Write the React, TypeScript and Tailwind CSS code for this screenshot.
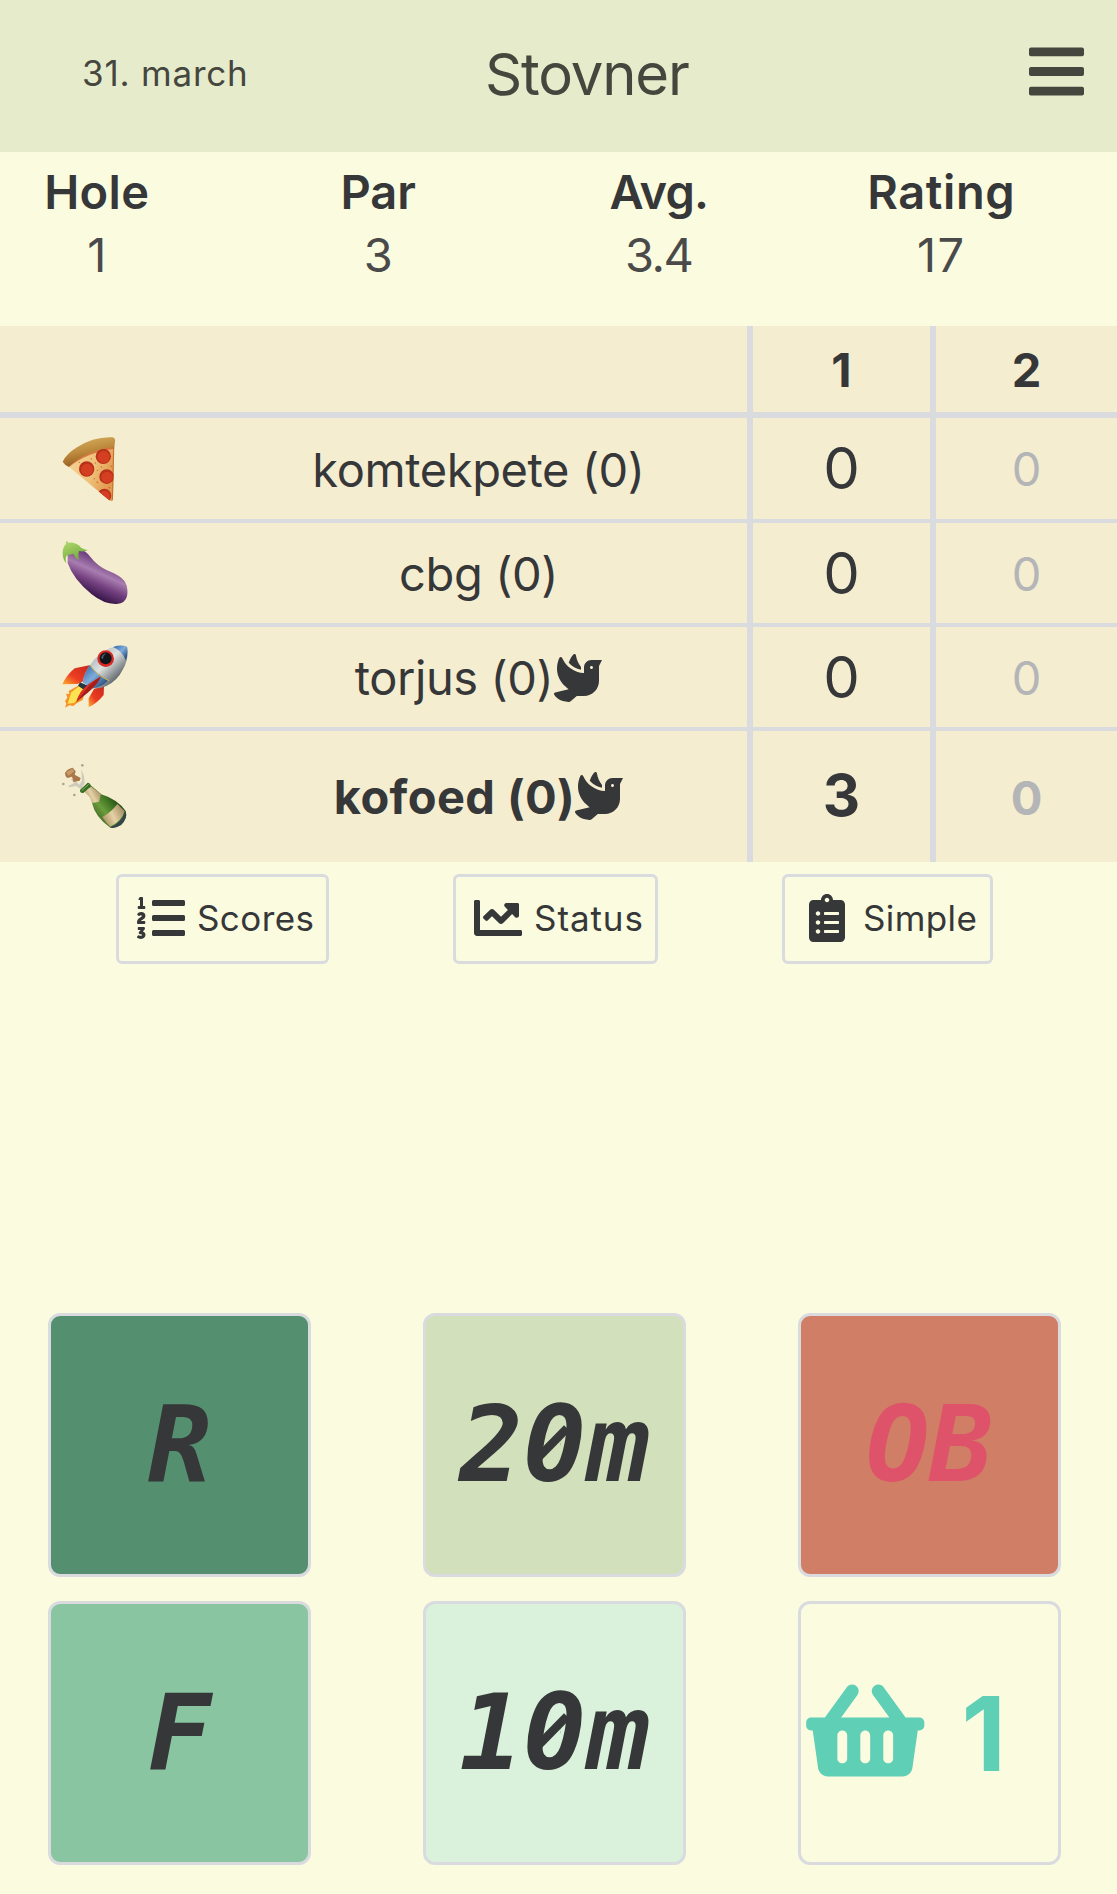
import React from 'react';
import { FaBars, FaChartLine, FaClipboardList, FaDove, FaListOl, FaShoppingBasket } from 'react-icons/fa';

function Pizza() {
  return (
    <svg className="block size-[66px]" viewBox="0 0 198 198">
      <defs>
        <linearGradient id="crust" x1="0" y1="0" x2="0.35" y2="1">
          <stop offset="0" stopColor="#dcb566" />
          <stop offset="0.55" stopColor="#bd8a3c" />
          <stop offset="1" stopColor="#93591f" />
        </linearGradient>
        <linearGradient id="cheese" x1="0" y1="0" x2="1" y2="0.4">
          <stop offset="0" stopColor="#f4d79a" />
          <stop offset="0.6" stopColor="#eec27a" />
          <stop offset="1" stopColor="#e39a50" />
        </linearGradient>
        <clipPath id="slice">
          <path d="M17 86 Q75 38 157 28 L153 186 Q151 196 142 190 L100 155 Z" />
        </clipPath>
      </defs>
      <path d="M17 86 Q75 38 157 28 L153 186 Q151 196 142 190 L100 155 Z" fill="url(#cheese)" />
      <g clipPath="url(#slice)">
        <path d="M15 90 Q75 40 160 31" fill="none" stroke="#c9501f" strokeWidth="8" opacity="0.65" />
        <path d="M156 30 L152 192" fill="none" stroke="#b96a25" strokeWidth="5" opacity="0.8" />
        <g fill="#b9301b">
          <circle cx="124" cy="58" r="23" />
          <circle cx="74" cy="96" r="23" />
          <circle cx="134" cy="119" r="22" />
          <circle cx="127" cy="176" r="21" />
        </g>
        <g fill="#d43f22">
          <circle cx="125" cy="60" r="18" />
          <circle cx="75" cy="98" r="18" />
          <circle cx="135" cy="121" r="17" />
          <circle cx="128" cy="177" r="16" />
        </g>
        <g fill="#d06a2c">
          <circle cx="100" cy="78" r="2" />
          <circle cx="106" cy="100" r="2" />
          <circle cx="97" cy="125" r="2" />
          <circle cx="106" cy="136" r="2.5" />
          <circle cx="148" cy="88" r="2.5" />
          <circle cx="118" cy="90" r="2" />
          <circle cx="52" cy="76" r="2" />
          <circle cx="142" cy="152" r="2.5" />
          <circle cx="88" cy="66" r="2" />
        </g>
      </g>
      <path d="M2 74 Q14 50 45 31 Q95 -2 152 1 Q161 2 159 14 L157 30 Q75 38 20 89 Q8 84 2 74 Z" fill="url(#crust)" />
    </svg>
  );
}

function Eggplant() {
  return (
    <svg className="block size-[66px]" viewBox="0 0 198 198">
      <defs>
        <linearGradient id="skin" x1="0.66" y1="0.2" x2="0.36" y2="0.82">
          <stop offset="0" stopColor="#613272" />
          <stop offset="0.4" stopColor="#a87db0" />
          <stop offset="0.68" stopColor="#73407f" />
          <stop offset="1" stopColor="#39174a" />
        </linearGradient>
        <linearGradient id="cap" x1="0" y1="0" x2="0.5" y2="1">
          <stop offset="0" stopColor="#b4da72" />
          <stop offset="1" stopColor="#6ea838" />
        </linearGradient>
      </defs>
      <path
        d="M17 42 Q24 22 46 23 Q70 25 86 49 Q104 73 135 88 Q176 104 188 121 Q200 139 195 166 Q190 187 164 189 Q128 191 89 160 Q34 115 17 66 Z"
        fill="url(#skin)"
      />
      <path
        d="M11 2 Q17 -1 19 5 Q38 2 53 15 Q58 24 77 27 Q69 34 51 30 Q48 40 50 57 Q39 51 34 38 L22 41 L13 45 Q9 53 13 67 Q1 56 2 32 Q4 15 12 9 Z"
        fill="url(#cap)"
      />
    </svg>
  );
}

function Rocket() {
  return (
    <svg className="block size-[66px]" viewBox="0 0 198 198">
      <defs>
        <linearGradient id="hull" x1="0.2" y1="0.2" x2="0.8" y2="0.8">
          <stop offset="0" stopColor="#a4b3bb" />
          <stop offset="0.45" stopColor="#dfe1df" />
          <stop offset="1" stopColor="#535c62" />
        </linearGradient>
        <linearGradient id="paint" x1="0.1" y1="0.2" x2="0.8" y2="0.9">
          <stop offset="0" stopColor="#4479b4" />
          <stop offset="0.45" stopColor="#80acdb" />
          <stop offset="1" stopColor="#28507f" />
        </linearGradient>
        <linearGradient id="fin" x1="1" y1="0" x2="0" y2="1">
          <stop offset="0" stopColor="#c5271c" />
          <stop offset="0.6" stopColor="#ec3d22" />
          <stop offset="1" stopColor="#ffb02e" />
        </linearGradient>
      </defs>
      <path d="M86 60 L38 70 Q14 90 1 118 L46 117 L66 108 Z" fill="url(#fin)" />
      <path d="M126 122 L125 150 Q106 174 80 187 L80 160 L96 132 Z" fill="url(#fin)" />
      <path
        d="M52 120 L20 138 L22 147 L12 146 L16 158 L9 168 L13 176 L9 188 L22 181 L34 183 L45 174 L62 165 L72 132 Z"
        fill="#f59328"
      />
      <path d="M52 123 L28 142 L22 160 L17 176 L36 174 L52 160 L68 136 Z" fill="#ffe252" />
      <path d="M54 112 L78 122 L68 136 L48 122 Z" fill="#263744" />
      <path
        d="M195 5 Q202 38 183 73 Q166 108 133 123 Q112 133 88 130 L62 112 Q66 85 84 60 Q105 29 143 10 Q170 -2 195 5 Z"
        fill="url(#hull)"
      />
      <path d="M195 5 Q199 25 192 47 Q182 18 153 6 Q176 -2 195 5 Z" fill="url(#paint)" />
      <path d="M84 60 Q102 85 139 106 Q116 130 88 130 L62 112 Q66 85 84 60 Z" fill="url(#paint)" />
      <path d="M84 60 Q102 90 141 107" fill="none" stroke="#d2bb52" strokeWidth="3" />
      <circle cx="131" cy="41" r="25" fill="#d92923" />
      <circle cx="131" cy="40" r="18" fill="#0f151b" />
      <path d="M117 39 Q120 27 133 25 Q124 31 123 42 Z" fill="#4a5a66" />
      <path d="M117 94 Q109 117 79 142 L43 171 Q52 137 82 116 Z" fill="#a91d18" />
      <path d="M117 94 Q92 109 71 134 L43 171 Q52 137 82 116 Z" fill="#dc3325" />
    </svg>
  );
}

function Champagne() {
  return (
    <svg className="block size-[66px]" viewBox="0 0 198 198">
      <defs>
        <linearGradient id="glass" x1="0.1" y1="0.8" x2="0.8" y2="0.2">
          <stop offset="0" stopColor="#1f4a14" />
          <stop offset="0.45" stopColor="#6c9c3c" />
          <stop offset="0.7" stopColor="#3d7422" />
          <stop offset="1" stopColor="#17330f" />
        </linearGradient>
        <linearGradient id="label" x1="0" y1="0.7" x2="1" y2="0.2">
          <stop offset="0" stopColor="#a88f60" />
          <stop offset="0.45" stopColor="#e5d2a6" />
          <stop offset="1" stopColor="#9c835a" />
        </linearGradient>
      </defs>
      <path d="M34 45 L52 62 L60 51 L58 16 L66 36 L68 56 L58 76 L42 66 L22 70 L19 65 L36 58 L26 44 Z" fill="#cfcbbb" />
      <g fill="#aaa394">
        <circle cx="61" cy="4" r="4" />
        <circle cx="4" cy="60" r="4" />
        <circle cx="37" cy="93" r="4" />
      </g>
      <path d="M9 26 Q16 14 32 11 L41 22 L38 32 L56 42 L53 50 L35 54 L30 38 L17 42 Q9 38 9 26 Z" fill="#aa7748" />
      <path d="M12 25 L31 14 L37 22 L20 35 Z" fill="#c79a69" />
      <path d="M66 77 L86 64 L118 91 Q166 106 191 141 Q197 163 177 183 Q156 196 143 190 Q99 157 91 120 L86 98 Z" fill="url(#glass)" />
      <path d="M65 81 L87 68 L117 90 L111 113 L91 117 L83 100 Z" fill="url(#label)" />
      <path d="M121 159 Q148 145 166 120 L188 142 Q180 170 145 188 Q130 174 121 159 Z" fill="url(#label)" />
      <path d="M191 141 Q198 163 177 183 Q156 196 143 190 Q179 177 191 141 Z" fill="#35444b" />
      <path d="M54 78 L77 56 Q85 57 87 67 L64 87 Q53 88 54 78 Z" fill="#376d24" />
      <path d="M59 80 L80 61" stroke="#8bb35c" strokeWidth="3" fill="none" />
    </svg>
  );
}

const stats = [
  { label: 'Hole', value: '1', labelClass: 'tracking-[0.35px]', valueClass: '' },
  { label: 'Par', value: '3', labelClass: '', valueClass: '' },
  { label: 'Avg.', value: '3.4', labelClass: 'tracking-[-0.87px] -ml-[2px]', valueClass: 'tracking-[-1.5px] -ml-[2px]' },
  { label: 'Rating', value: '17', labelClass: 'tracking-[0.59px]', valueClass: 'tracking-[1.4px]' },
];

const players = [
  { icon: <Pizza />, name: 'komtekpete (0)', dove: false, score: '0', next: '0', active: false },
  { icon: <Eggplant />, name: 'cbg (0)', dove: false, score: '0', next: '0', active: false },
  { icon: <Rocket />, name: 'torjus (0)', dove: true, score: '0', next: '0', active: false },
  { icon: <Champagne />, name: 'kofoed (0)', dove: true, score: '3', next: '0', active: true },
];

const actions = [
  { label: 'Scores', Icon: FaListOl, className: 'w-[213px] tracking-[0.41px]' },
  { label: 'Status', Icon: FaChartLine, className: 'w-[205px] tracking-[0.92px]' },
  { label: 'Simple', Icon: FaClipboardList, className: 'w-[211px] tracking-[0.4px]' },
];

/** Slash through the zero of a distance label, drawn over the middle glyph. */
function ZeroSlash({ fill }: { fill: string }) {
  return (
    <svg className="absolute left-[107px] top-[106px] h-10 w-10" viewBox="0 0 40 40">
      <ellipse cx="20" cy="20" rx="8" ry="10" fill={fill} />
      <path d="M6 34.7 L34 6.2" stroke="#363738" strokeWidth="8.4" />
    </svg>
  );
}

const tileBase =
  "relative flex h-[264px] w-[263px] items-center justify-center rounded-xl border-[3px] border-[#d9dbdf] font-['DejaVu_Sans_Mono',monospace] text-[105.6px] leading-none font-bold italic";

export default function App() {
  return (
    <div className="flex h-[1894px] w-[1117px] flex-col overflow-hidden bg-[#fbfbe0] font-['Inter',sans-serif] text-[#363738]">
      <header className="flex h-[152px] shrink-0 items-center justify-between bg-[#e6ebcc] pr-[33px] pb-1 pl-[82px] text-[#45463d]">
        <div className="w-[403px] pb-[2px] text-[35px] leading-none tracking-[0.8px]">31. march</div>
        <h1 className="flex-1 text-[58px] leading-none tracking-[-1.16px]">Stovner</h1>
        <FaBars className="mt-[-6px] h-[63px] w-[55px]" />
      </header>

      <section className="h-[174px] shrink-0 pt-[8px]">
        <div className="-ml-11 flex">
          {stats.map((s) => (
            <div key={s.label} className="flex w-[281.5px] flex-col items-center text-[47px] leading-[63px]">
              <div className={'font-semibold ' + s.labelClass}>{s.label}</div>
              <div className={'text-[#4a4a4a] ' + s.valueClass}>{s.value}</div>
            </div>
          ))}
        </div>
      </section>

      <section className="shrink-0 bg-[#f5edd0]">
        <div className="grid h-[92px] grid-cols-[753px_183px_181px] border-b-[6px] border-[#d9dbdf] text-[47px] leading-none font-bold">
          <div className="border-r-[6px] border-[#d9dbdf]" />
          <div className="flex items-center justify-center border-r-[6px] border-[#d9dbdf]">1</div>
          <div className="flex items-center justify-center">2</div>
        </div>
        {players.map((p) => (
          <div
            key={p.name}
            className={
              'grid grid-cols-[210px_543px_183px_181px] leading-none ' +
              (p.active ? 'h-[131px] font-bold' : 'h-[105px] border-b-4 border-[#d9dbdf] nth-[n+3]:h-[104px]')
            }
          >
            <div className={'flex items-center pl-[62px] ' + (p.active ? '' : 'pt-[2px]')}>{p.icon}</div>
            <div
              className={
                'flex items-center justify-center border-r-[6px] border-[#d9dbdf] text-[47px] whitespace-pre ' +
                (p.active ? 'tracking-[0.4px]' : 'pt-px tracking-[-0.4px]')
              }
            >
              {p.name}
              {p.dove && <FaDove className={'size-12 ' + (p.active ? 'mb-[2px]' : 'ml-px')} />}
            </div>
            <div className={'flex items-center justify-center border-r-[6px] border-[#d9dbdf] text-[58px] ' + (p.active ? 'pb-1' : 'pb-px')}>
              {p.score}
            </div>
            <div className={'flex items-center justify-center text-[47px] text-[#b4b5b7] ' + (p.active ? 'pt-px' : '')}>{p.next}</div>
          </div>
        ))}
      </section>

      <section className="flex shrink-0 justify-between pt-3 pr-[124px] pl-[116px]">
        {actions.map(({ label, Icon, className }) => (
          <button
            key={label}
            className={
              'flex h-[90px] items-center gap-3 rounded-md border-[3px] border-[#d9dbdf] pb-[2px] pl-[18px] text-[35px] leading-none ' +
              className
            }
          >
            <Icon className="size-12 shrink-0" />
            {label}
          </button>
        ))}
      </section>

      <section className="mt-auto mb-[29px] grid shrink-0 grid-cols-[263px_263px_263px] gap-x-28 gap-y-6 pl-12">
        <button className={tileBase + ' bg-[#54906f]'}>R</button>
        <button className={tileBase + ' bg-[#d2e0bb]'}>
          20m
          <ZeroSlash fill="#d2e0bb" />
        </button>
        <button className={tileBase + ' bg-[#d07e66] text-[#de5369]'}>OB</button>
        <button className={tileBase + ' bg-[#89c5a1]'}>F</button>
        <button className={tileBase + ' bg-[#daf2dc]'}>
          10m
          <ZeroSlash fill="#daf2dc" />
        </button>
        <button className="flex h-[264px] w-[263px] items-center rounded-xl border-[3px] border-[#d9dbdf] pl-[5px] text-[#5fcfb6]">
          <FaShoppingBasket className="mb-[6px] h-[105px] w-[118.5px]" />
          <span className="ml-[37px] text-[103px] leading-none font-bold">1</span>
        </button>
      </section>
    </div>
  );
}
